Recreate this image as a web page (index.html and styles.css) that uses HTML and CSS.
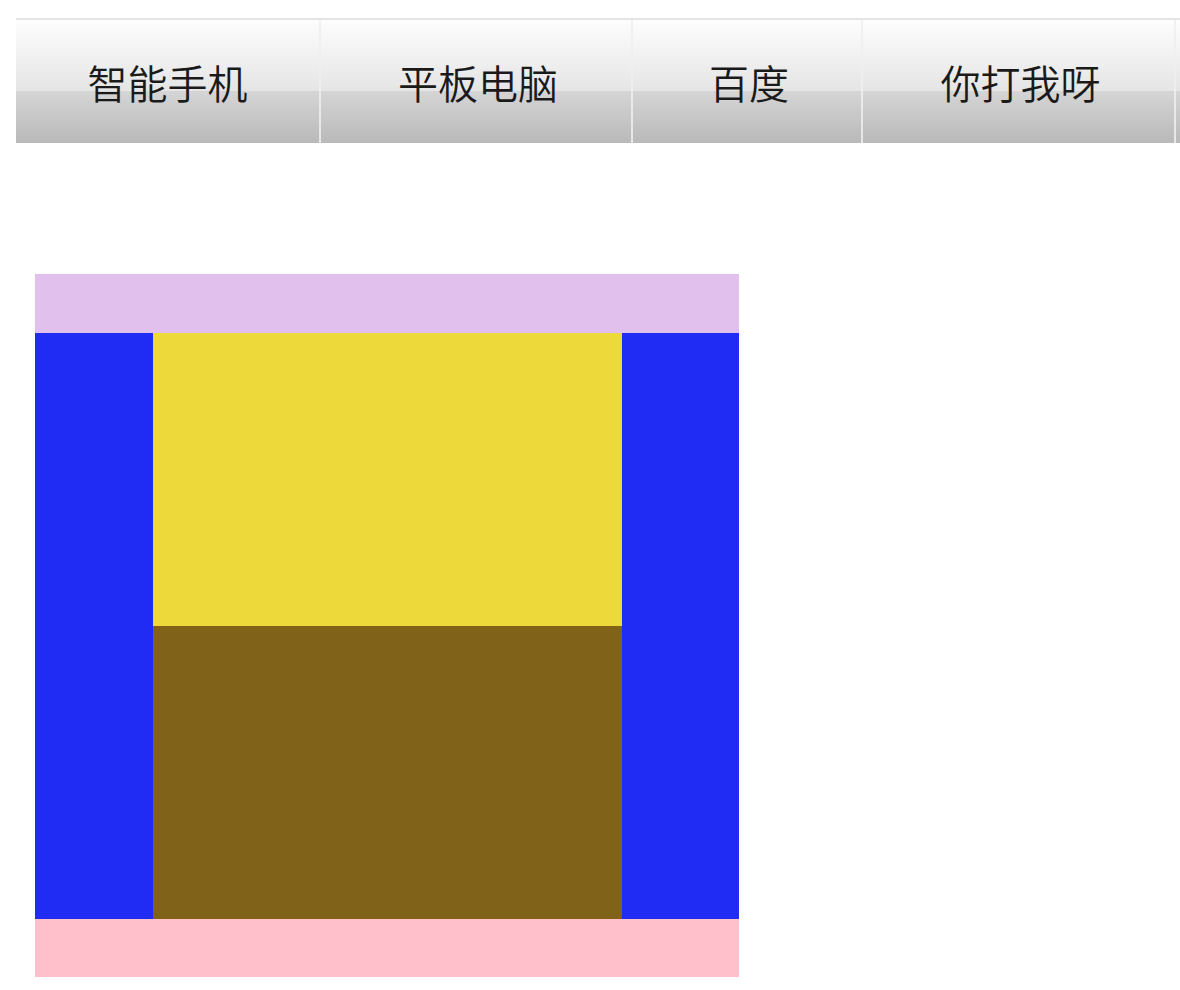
FILE: index.html
```html
<!DOCTYPE html>
<html lang="zh">
<head>
<meta charset="utf-8">
<title>Nav</title>
<link rel="stylesheet" href="styles.css">
</head>
<body>
<nav class="nav">
  <ul class="nav-list">
    <li class="nav-item">智能手机</li>
    <li class="nav-item">平板电脑</li>
    <li class="nav-item">百度</li>
    <li class="nav-item">你打我呀</li>
    <li class="nav-item nav-item-rest"></li>
  </ul>
</nav>
<section class="layout">
  <div class="header"></div>
  <div class="middle">
    <div class="side"></div>
    <div class="center">
      <div class="center-top"></div>
      <div class="center-bottom"></div>
    </div>
    <div class="side"></div>
  </div>
  <div class="footer"></div>
</section>
</body>
</html>
```

FILE: styles.css
```css
html, body {
  margin: 0;
  padding: 0;
  background: #ffffff;
}
body {
  padding: 18px 0 0 16px;
  font-family: "Noto Sans CJK SC", "Noto Sans", sans-serif;
}
.nav {
  border-top: 2px solid #e4e4e4;
  background: linear-gradient(to bottom, #fdfdfd 0%, #e5e5e5 58%, #d5d5d5 58%, #b9b9b9 100%);
  height: 123px;
}
.nav-list {
  list-style: none;
  margin: 0;
  padding: 0;
  height: 100%;
  display: grid;
  grid-template-columns: 305px 312px 230px 313px 1fr;
}
.nav-item {
  display: flex;
  align-items: center;
  justify-content: center;
  border-right: 2px solid rgba(238, 238, 238, 0.85);
  font-size: 40px;
  font-weight: 350;
  color: #1a1a1a;
  line-height: 1;
}
.nav-item + .nav-item {
  padding-left: 4px;
}
.nav-item-rest {
  border-right: none;
}
.layout {
  width: 704px;
  margin: 131px 0 0 19px;
}
.header {
  height: 59px;
  background: #e2c0ee;
}
.middle {
  display: flex;
  height: 586px;
}
.side {
  width: 118px;
  background: #202cf3;
}
.middle .side:last-child {
  width: 117px;
}
.center {
  flex: 1;
  display: flex;
  flex-direction: column;
}
.center-top {
  flex: 1;
  background: #eed93a;
}
.center-bottom {
  flex: 1;
  background: #806318;
}
.footer {
  height: 58px;
  background: #ffc0cb;
}
```
